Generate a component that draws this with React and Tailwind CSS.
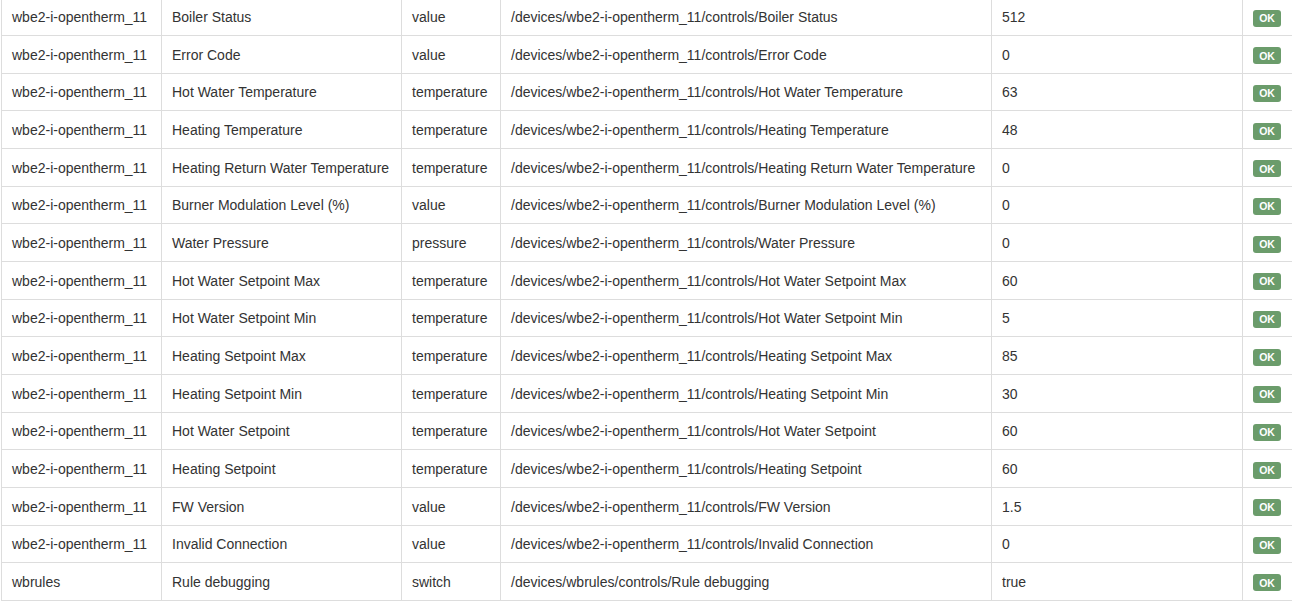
const rows = [
  ["wbe2-i-opentherm_11", "Boiler Status", "value", "512"],
  ["wbe2-i-opentherm_11", "Error Code", "value", "0"],
  ["wbe2-i-opentherm_11", "Hot Water Temperature", "temperature", "63"],
  ["wbe2-i-opentherm_11", "Heating Temperature", "temperature", "48"],
  ["wbe2-i-opentherm_11", "Heating Return Water Temperature", "temperature", "0"],
  ["wbe2-i-opentherm_11", "Burner Modulation Level (%)", "value", "0"],
  ["wbe2-i-opentherm_11", "Water Pressure", "pressure", "0"],
  ["wbe2-i-opentherm_11", "Hot Water Setpoint Max", "temperature", "60"],
  ["wbe2-i-opentherm_11", "Hot Water Setpoint Min", "temperature", "5"],
  ["wbe2-i-opentherm_11", "Heating Setpoint Max", "temperature", "85"],
  ["wbe2-i-opentherm_11", "Heating Setpoint Min", "temperature", "30"],
  ["wbe2-i-opentherm_11", "Hot Water Setpoint", "temperature", "60"],
  ["wbe2-i-opentherm_11", "Heating Setpoint", "temperature", "60"],
  ["wbe2-i-opentherm_11", "FW Version", "value", "1.5"],
  ["wbe2-i-opentherm_11", "Invalid Connection", "value", "0"],
  ["wbrules", "Rule debugging", "switch", "true"],
];

const cell = "flex items-center shrink-0 border-l border-[#dddddd] pl-[10px] pt-[2px] whitespace-nowrap";

export default function App() {
  return (
    <div className="w-[1292px] h-[608px] overflow-hidden bg-white pl-[1px] font-['Liberation_Sans',Arial,sans-serif] text-[14px] text-[#333333]">
      <div className="flex flex-col mt-[-1.7px] w-[1300px]">
        {rows.map(([device, control, type, value], i) => (
          <div key={i} className="flex h-[37.67px] border-b border-[#dddddd]">
            <div className={`${cell} w-[160px]`}>{device}</div>
            <div className={`${cell} w-[240px]`}>{control}</div>
            <div className={`${cell} w-[99px]`}>{type}</div>
            <div className={`${cell} w-[491px]`}>
              /devices/{device}/controls/{control}
            </div>
            <div className={`${cell} w-[251px]`}>{value}</div>
            <div className={`${cell} flex-1`}>
              <span className="mt-[1px] inline-flex items-center justify-center w-[28px] h-[17px] rounded-[3px] bg-[#6b9c6b] text-white text-[10.5px] font-bold leading-none">
                OK
              </span>
            </div>
          </div>
        ))}
      </div>
    </div>
  );
}
